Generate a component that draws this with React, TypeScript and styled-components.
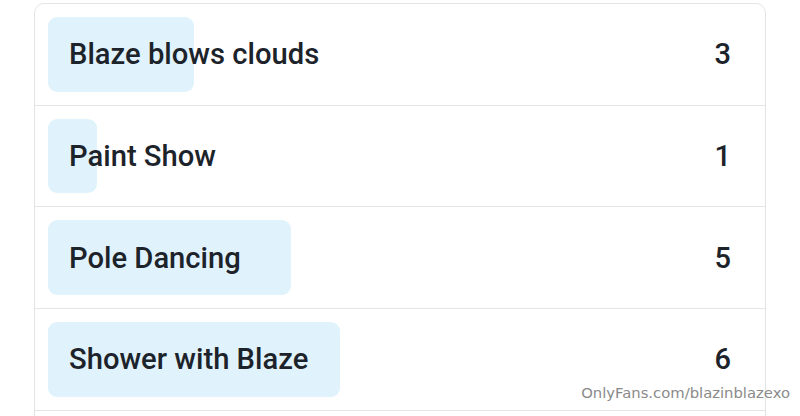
import React from "react";
import styled, { createGlobalStyle } from "styled-components";

const Global = createGlobalStyle`
  html, body { margin: 0; padding: 0; background: #ffffff; }
  body { font-family: Roboto, "Liberation Sans", sans-serif; overflow: hidden; }
`;

const Page = styled.div`
  width: 800px;
  height: 416px;
  position: relative;
  overflow: hidden;
  padding: 3px 34px 0 34px;
  box-sizing: border-box;
`;

const Card = styled.div`
  border: 1px solid #e2e4e6;
  border-radius: 10px;
  background: #fff;
  display: flex;
  flex-direction: column;
`;

const Row = styled.div`
  position: relative;
  height: 100.7px;
  border-bottom: 1px solid #e3e5e7;
  display: flex;
  align-items: center;
  justify-content: space-between;
  padding: 0 34px 0 34px;
  box-sizing: content-box;
`;

const Bar = styled.div`
  position: absolute;
  left: 13px;
  top: 13px;
  bottom: 13px;
  background: #e0f3fc;
  border-radius: 9px;
`;

const Label = styled.span`
  position: relative;
  font-size: 29.2px;
  font-weight: 500;
  color: #1d232a;
`;

const Count = styled.span`
  position: relative;
  font-size: 29px;
  font-weight: 500;
  color: #1d232a;
`;

const Watermark = styled.div`
  position: absolute;
  right: 10px;
  bottom: 15px;
  font-family: "DejaVu Sans", sans-serif;
  font-size: 14.8px;
  color: #8a8a8a;
`;

const options = [
  { label: "Blaze blows clouds", count: 3 },
  { label: "Paint Show", count: 1 },
  { label: "Pole Dancing", count: 5 },
  { label: "Shower with Blaze", count: 6 },
  { label: "", count: 0 },
];

const total = 15;

export default function App() {
  return (
    <>
      <Global />
      <Page>
        <Card>
          {options.map((o, i) => (
            <Row key={i}>
              {o.count > 0 && (
                <Bar style={{ width: `${(o.count / total) * 730}px` }} />
              )}
              <Label>{o.label}</Label>
              <Count>{o.label ? o.count : ""}</Count>
            </Row>
          ))}
        </Card>
        <Watermark>OnlyFans.com/blazinblazexo</Watermark>
      </Page>
    </>
  );
}
